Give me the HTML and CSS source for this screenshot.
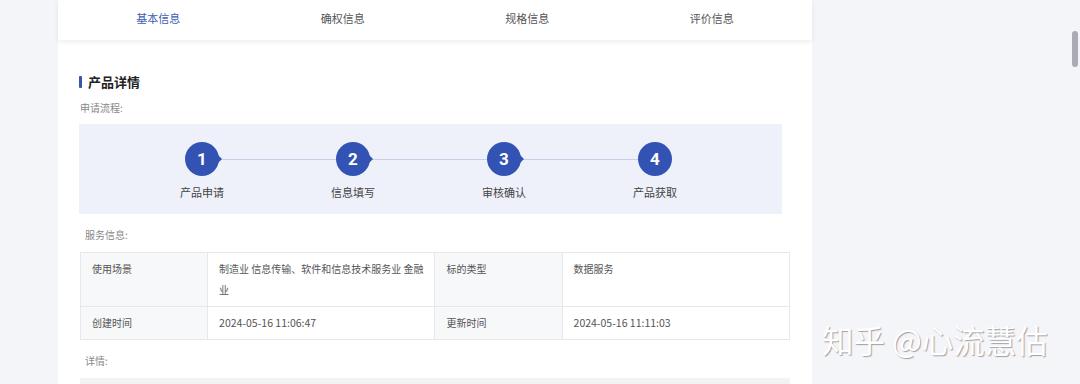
FILE: index.html
```html
<!DOCTYPE html>
<html lang="zh-CN">
<head>
    <meta charset="UTF-8">
    <meta name="viewport" content="width=device-width, initial-scale=1.0">
    <title>产品详情</title>
    <link rel="stylesheet" href="styles.css">
</head>
<body>
    <div class="page">
        <div class="panel">
            <div class="tabs">
                <div class="tab active">基本信息</div>
                <div class="tab">确权信息</div>
                <div class="tab">规格信息</div>
                <div class="tab">评价信息</div>
            </div>

            <div class="content">
                <h2 class="title">产品详情</h2>
                <div class="label">申请流程:</div>

                <div class="steps">
                    <div class="step">
                        <svg class="badge" width="40" height="34" viewBox="0 0 40 34"><circle cx="17" cy="17" r="17"/><polygon points="32,12 37,17 32,22"/><text x="17" y="23">1</text></svg>
                        <span>产品申请</span>
                    </div>
                    <div class="step">
                        <svg class="badge" width="40" height="34" viewBox="0 0 40 34"><circle cx="17" cy="17" r="17"/><polygon points="32,12 37,17 32,22"/><text x="17" y="23">2</text></svg>
                        <span>信息填写</span>
                    </div>
                    <div class="step">
                        <svg class="badge" width="40" height="34" viewBox="0 0 40 34"><circle cx="17" cy="17" r="17"/><polygon points="32,12 37,17 32,22"/><text x="17" y="23">3</text></svg>
                        <span>审核确认</span>
                    </div>
                    <div class="step">
                        <svg class="badge" width="40" height="34" viewBox="0 0 40 34"><circle cx="17" cy="17" r="17"/><text x="17" y="23">4</text></svg>
                        <span>产品获取</span>
                    </div>
                </div>

                <div class="label sub">服务信息:</div>
                <table class="info">
                    <tr>
                        <td class="key">使用场景</td>
                        <td class="val">制造业 信息传输、软件和信息技术服务业 金融业</td>
                        <td class="key">标的类型</td>
                        <td class="val">数据服务</td>
                    </tr>
                    <tr>
                        <td class="key">创建时间</td>
                        <td class="val date">2024-05-16 11:06:47</td>
                        <td class="key">更新时间</td>
                        <td class="val date">2024-05-16 11:11:03</td>
                    </tr>
                </table>

                <div class="label sub">详情:</div>
                <div class="detail"></div>
            </div>
        </div>
    </div>

    <div class="scroll-thumb"></div>
    <div class="watermark">知乎 @心流慧估</div>
</body>
</html>
```

FILE: styles.css
```css
body {
    margin: 0;
    padding: 0;
    background-color: #f4f5f9;
    font-family: "Noto Sans CJK SC", "Noto Sans", sans-serif;
    color: #333;
    overflow: hidden;
}
.page {
    height: 384px;
    padding-left: 58px;
}
.panel {
    width: 754px;
    height: 100%;
    background-color: #fff;
}
.tabs {
    display: grid;
    grid-template-columns: repeat(4, 1fr);
    height: 40px;
    padding: 0 8px;
    box-shadow: 0 2px 5px rgba(0,0,0,0.07);
    position: relative;
}
.tab {
    font-size: 11px;
    color: #555;
    text-align: center;
    line-height: 36px;
}
.tab.active {
    color: #3d5db5;
}
.content {
    padding: 32px 0 0 21px;
}
.title {
    margin: 0;
    font-size: 13px;
    font-weight: bold;
    line-height: 20px;
    color: #222;
    display: flex;
    align-items: center;
    gap: 6px;
}
.title::before {
    content: "";
    width: 3px;
    height: 12px;
    background-color: #3a55a8;
    border-radius: 1px;
}
.label {
    margin: 7px 0 7px 1px;
    font-size: 10px;
    line-height: 18px;
    color: #888;
}
.label.sub {
    margin: 12px 0 8px 6px;
}
.steps {
    width: 703px;
    height: 90px;
    box-sizing: border-box;
    background-color: #eef1f9;
    display: flex;
    justify-content: center;
    padding: 18px 4px 0 0;
}
.step {
    width: 151px;
    display: flex;
    flex-direction: column;
    align-items: center;
    position: relative;
}
.step::after {
    content: "";
    position: absolute;
    left: 50%;
    top: 17px;
    width: 100%;
    height: 1px;
    background-color: #c8cee8;
}
.step:last-child::after {
    display: none;
}
.badge {
    margin-left: 6px;
    position: relative;
    z-index: 1;
    fill: #3253b3;
}
.badge text {
    fill: #fff;
    font-family: Roboto, "Noto Sans", sans-serif;
    font-weight: bold;
    font-size: 17px;
    text-anchor: middle;
}
.step span {
    margin-top: 7px;
    font-size: 11px;
    line-height: 18px;
    color: #444;
}
.info {
    width: 710px;
    margin-left: 1px;
    border-collapse: collapse;
    border: 1px solid #dcdfe5;
    font-size: 10px;
    color: #555;
}
.info td {
    border: 1px solid #e6e8ec;
    padding: 5px 10px 6px 11px;
    line-height: 21px;
    vertical-align: top;
}
.info .key {
    width: 106px;
    background-color: #f7f8fa;
}
.info .val {
    width: 207px;
}
.info .date {
    font-size: 10.5px;
}
.detail {
    width: 710px;
    margin-left: 1px;
    height: 20px;
    background-color: #f3f3f5;
}
.scroll-thumb {
    position: absolute;
    left: 1072px;
    top: 31px;
    width: 6px;
    height: 36px;
    border-radius: 3px;
    background-color: #a9acb4;
}
.watermark {
    position: absolute;
    left: 822px;
    top: 318px;
    font-size: 31.5px;
    line-height: 42px;
    color: #fff;
    text-shadow: 1px 1px 1px rgba(0,0,0,0.35);
    white-space: nowrap;
}
```
